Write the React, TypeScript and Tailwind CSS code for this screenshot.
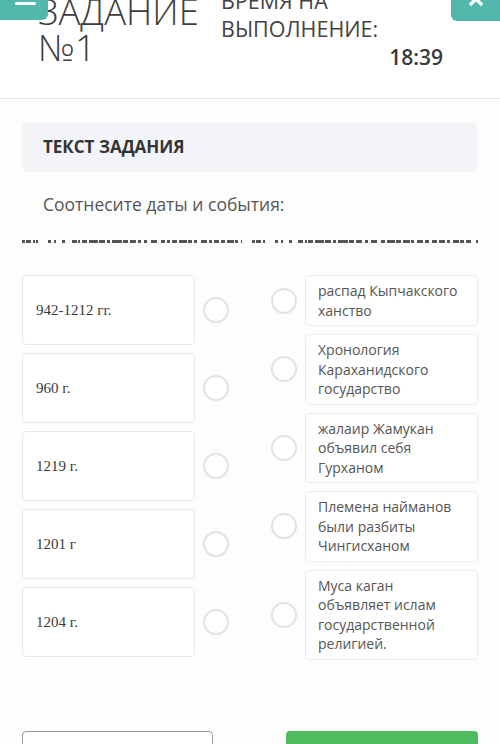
import { X } from 'lucide-react'

const dates = ['942-1212 гг.', '960 г.', '1219 г.', '1201 г', '1204 г.']

const events = [
  'распад Кыпчакского ханство',
  'Хронология Караханидского государство',
  'жалаир Жамукан объявил себя Гурханом',
  'Племена найманов были разбиты Чингисханом',
  'Муса каган объявляет ислам государственной религией.',
]

// clipped text bottoms, drawn as a row of short dashes
const dashesLeft = [3, 1, 5, 2, 2, 1, 2, 10, 3, 3, 2, 6, 3, 7, 5, 1, 2, 2, 5, 2, 9, 1, 6, 2, 3, 2, 10, 1, 5, 2, 6, 2, 3, 3, 3, 4, 6, 4, 4, 2, 3, 2, 5, 2, 8, 1, 4, 2, 3, 4, 6, 2, 3, 2, 5, 2, 4, 2, 7, 1, 3, 3, 6, 2, 4]
const dashesRight = [3, 1, 5, 2, 2, 10, 3, 3, 2, 6, 3, 6, 5, 2, 2, 1, 5, 2, 9, 1, 6, 2, 3, 2, 10, 1, 5, 2, 6, 3, 3, 3, 6, 4, 4, 2, 8, 1, 5, 2, 7, 1, 3, 3, 6, 2, 4, 3, 5, 2, 6, 2, 3, 3, 6, 1, 4, 2, 5, 5, 8]

function Dashes({ list }: { list: number[] }) {
  return (
    <div className="flex h-[3px] overflow-hidden">
      {list.map((w, i) => (
        <div
          key={i}
          className={i % 2 === 0 ? 'h-[3px] bg-[#555] shrink-0' : 'h-[3px] shrink-0'}
          style={{ width: w }}
        />
      ))}
    </div>
  )
}

function Circle() {
  return <div className="w-[26px] h-[26px] rounded-full border-2 border-[#e2e2e2] bg-white shrink-0" />
}

export default function App() {
  return (
    <div className="relative w-[500px] h-[744px] overflow-hidden bg-[#fdfdfd] font-['Open_Sans',sans-serif] text-[#444]">
      {/* corner buttons */}
      <div className="absolute top-0 left-0 w-[48px] h-[20px] rounded-br-md bg-[#52b8ab] z-10">
        <div className="absolute left-[15px] top-[2px] w-[21px] h-[3px] rounded-sm bg-white" />
      </div>
      <div className="absolute top-0 right-0 w-[49px] h-[21px] rounded-bl-md bg-[#52b8ab] z-10 overflow-hidden">
        <X size={20} strokeWidth={4} className="absolute left-[15px] top-[-11px] text-white" />
      </div>

      {/* header */}
      <div className="h-[99px] border-b border-[#e6e6e6] bg-white flex">
        <div className="pl-[38px] w-[221px] mt-[-7px] text-[36.5px] leading-[36px] font-light text-[#3d3d3d]">
          <div>ЗАДАНИЕ</div>
          <div>№1</div>
        </div>
        <div className="w-[222px] mt-[-13px] text-[#444]">
          <div className="text-[21.5px] leading-[28px]">
            <div>ВРЕМЯ НА</div>
            <div>ВЫПОЛНЕНИЕ:</div>
          </div>
          <div className="text-right text-[21px] leading-[28px] font-semibold text-[#3a3a3a]">18:39</div>
        </div>
      </div>

      <div className="px-[22px] pt-[23px]">
        <div className="h-[50px] rounded-md bg-[#f3f4f7] flex items-center px-[21px]">
          <span className="text-[17px] font-bold text-[#333]">ТЕКСТ ЗАДАНИЯ</span>
        </div>

        <div className="pl-[21px] pt-[20px] text-[17.5px] leading-[24px] text-[#555]">
          Соотнесите даты и события:
        </div>

        <div className="mt-[24px] flex justify-between">
          <div className="w-[220px]">
            <Dashes list={dashesLeft} />
          </div>
          <div className="w-[226px]">
            <Dashes list={dashesRight} />
          </div>
        </div>

        <div className="mt-[32px] flex justify-between">
          <div className="flex flex-col gap-[8px]">
            {dates.map(d => (
              <div key={d} className="flex items-center gap-[8px]">
                <div className="w-[173px] h-[70px] rounded bg-white border border-[#e9e9e9] flex items-center pl-[13px] font-['Liberation_Serif',serif] text-[15px] text-[#3a3a3a]">
                  {d}
                </div>
                <Circle />
              </div>
            ))}
          </div>
          <div className="flex flex-col gap-[8px]">
            {events.map(e => (
              <div key={e} className="flex items-center gap-[8px]">
                <Circle />
                <div className="w-[173px] rounded bg-white border border-[#ececec] px-[12px] py-[5px] text-[14px] leading-[19.5px] text-[#555]">
                  {e}
                </div>
              </div>
            ))}
          </div>
        </div>

        <div className="mt-[71px] flex justify-between">
          <div className="w-[191px] h-[44px] rounded border border-[#9a9a9a] bg-white" />
          <div className="w-[192px] h-[44px] rounded bg-[#4cbc5f]" />
        </div>
      </div>
    </div>
  )
}
